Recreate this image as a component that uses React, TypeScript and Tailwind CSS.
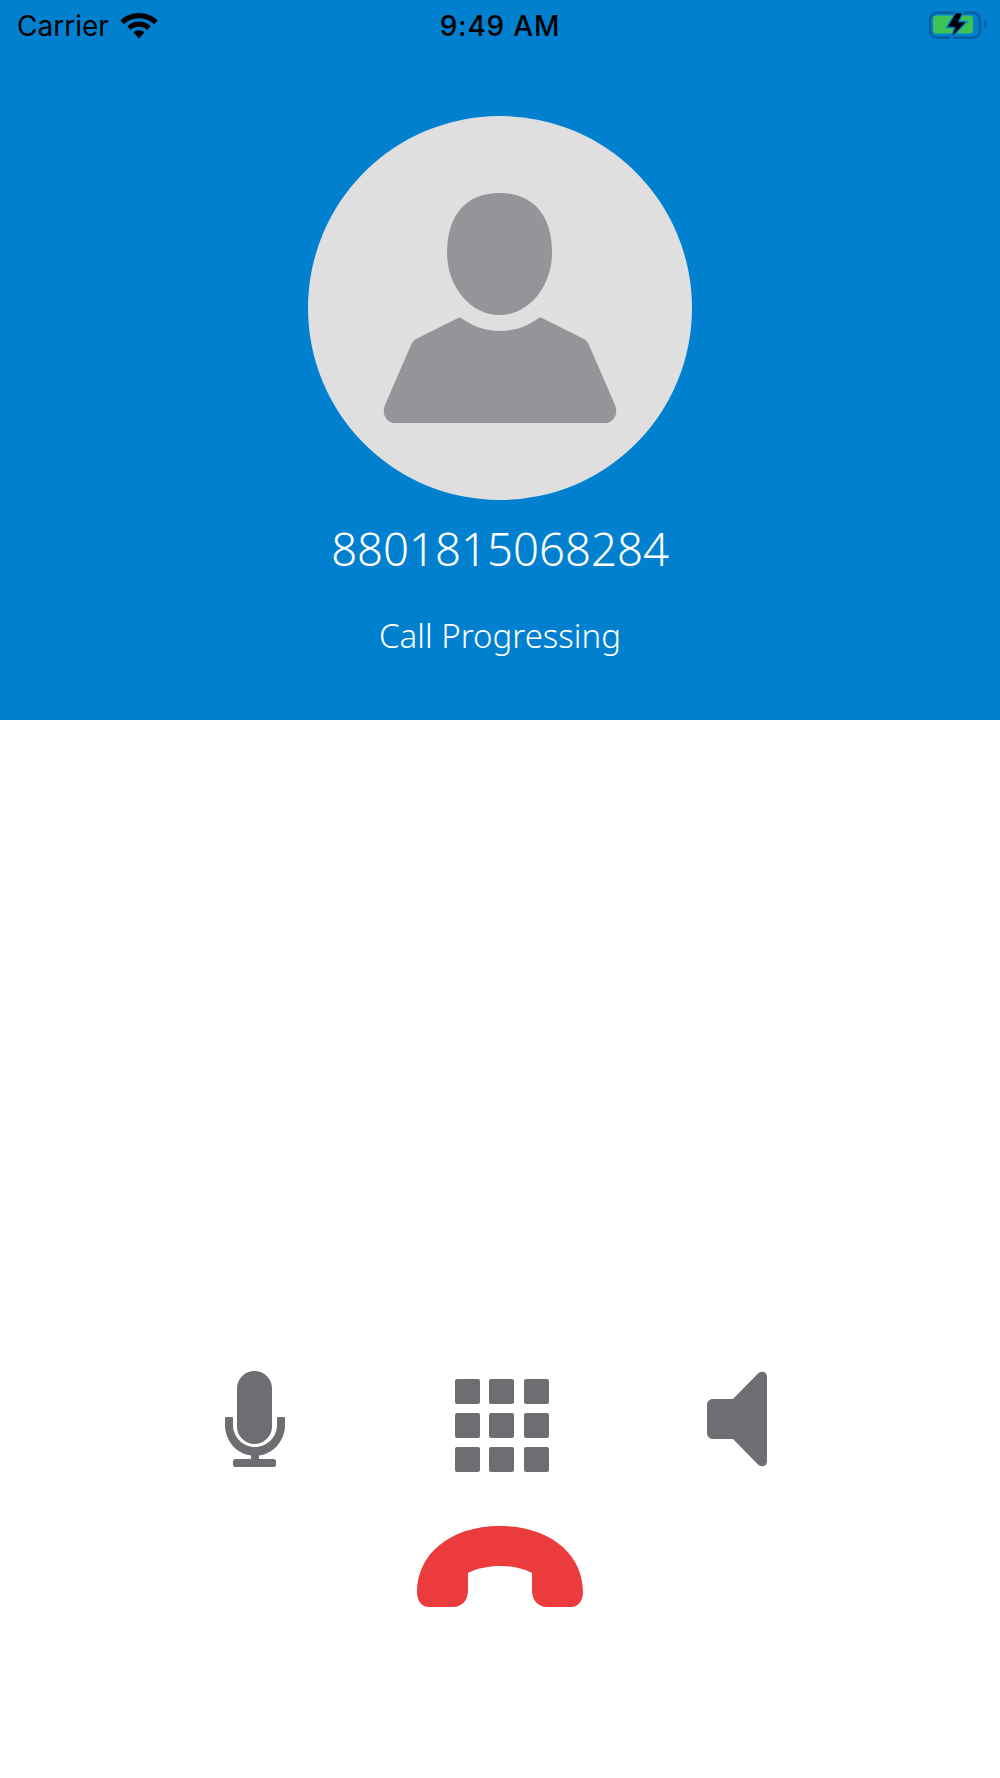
const iosFont = "font-['Inter','Liberation_Sans',sans-serif]";
const bodyFont = "font-['Noto_Sans','Open_Sans',sans-serif]";

function WifiIcon() {
  return (
    <svg width="38" height="26" viewBox="0 0 38 26" className="block">
      <path d="M19 0C11.6 0 5.2 2.9 0.4 7.4L3.9 11.2C7.9 7.5 13.1 5.2 19 5.2s11.1 2.3 15.1 6l3.5-3.8C32.8 2.9 26.4 0 19 0z" fill="#000" />
      <path d="M19 8.6c-4.6 0-8.6 1.8-11.7 4.6l3.5 3.8c2.1-2 5-3.2 8.2-3.2s6.1 1.200 8.200 3.200l3.500-3.800C27.600 10.400 23.600 8.600 19 8.600z" fill="#000" />
      <path d="M19 17.200c-2.200 0-4.100 0.800-5.600 2.100L19 25.500l5.600-6.200c-1.500-1.300-3.400-2.100-5.600-2.100z" fill="#000" />
    </svg>
  );
}

function BatteryIcon() {
  return (
    <svg width="60" height="30" viewBox="0 0 60 30" className="block">
      <rect x="2" y="1.750" width="50" height="25" rx="7" fill="none" stroke="#05609f" strokeWidth="2.500" />
      <rect x="5" y="4.500" width="40" height="18" rx="3" fill="#3dc453" />
      <path d="M56 9l2 1c1 .6 1 5.400 0 6l-2 1z" fill="#05609f" />
      <path d="M27.500 1.500H35L31 10.500H39L22.500 28L26.500 16.500H18.500z" fill="#000" stroke="#0180d0" strokeWidth="1.500" />
    </svg>
  );
}

function PersonIcon() {
  return (
    <svg width="234" height="230" viewBox="0 0 234 230" className="block">
      <path d="M116.500 0C148 0 169 20 169 60C169 93 146 122 116.500 122C87 122 64 93 64 60C64 20 85 0 116.500 0z" fill="#939598" />
      <path d="M74 125.500C76 124 77.500 124 79 125.500C89 133 102 138 117 138C132 138 145 133 155 125.500C156.500 124 158 124 160 125.500L201 146C204 148 205 150 206 152L232 212C236 222 230 230 221 230H13C4 230 -2 222 2 212L28 152C29 150 30 148 33 146z" fill="#939598" />
    </svg>
  );
}

function MicIcon() {
  return (
    <svg width="60" height="96" viewBox="0 0 60 96" className="block">
      <rect x="12" y="0" width="35" height="73" rx="17.500" fill="#6d6e71" />
      <path d="M1 46H7C7.500 46 8 46.500 8 47V54C8 66 18 76 30 76S52 66 52 54V47C52 46.500 52.500 46 53 46H59C59.500 46 60 46.500 60 47V54C60 70 48 83 34 84.500V88H30 26V84.500C12 83 0 70 0 54V47C0 46.500 .5 46 1 46z" fill="#6d6e71" />
      <rect x="8" y="88" width="43" height="8" rx="2.500" fill="#6d6e71" />
    </svg>
  );
}

function SpeakerIcon() {
  return (
    <svg width="60" height="96" viewBox="0 0 60 96" className="block">
      <path d="M6 28H26L50.500 3C54 -1 60 0.500 60 6V90C60 95.500 54 97 50.500 93L26 68H6C2.500 68 0 65.500 0 62V34C0 30.500 2.500 28 6 28z" fill="#6d6e71" />
    </svg>
  );
}

function HangupIcon() {
  return (
    <svg width="166" height="81" viewBox="0 0 166 81" className="block">
      <path d="M83 0C134 0 166 29 166 66C166 75 161 81 154 81H130C121 81 115 74 115 65V47C105 42 94 40 83 40C72 40 61 42 51 47V65C51 74 45 81 36 81H12C5 81 0 75 0 66C0 29 32 0 83 0z" fill="#ec3b3d" />
    </svg>
  );
}

const keys = [1, 2, 3, 4, 5, 6, 7, 8, 9];

export default function App() {
  return (
    <main className="flex h-[1778px] w-[1000px] flex-col bg-white">
      <section className="flex h-[720px] flex-col items-center bg-[#0180d0]">
        <div className={`grid h-[51px] w-full grid-cols-3 items-center px-[12px] text-black ${iosFont}`}>
          <div className="ml-[5px] flex items-center gap-[11px] text-[28px] leading-none">
            <span>Carrier</span>
            <WifiIcon />
          </div>
          <div className="text-center text-[28px] leading-none font-medium tracking-[0.8px]">9:49 AM</div>
          <div className="flex justify-end">
            <BatteryIcon />
          </div>
        </div>
        <div className="mt-[65px] flex h-[384px] w-[384px] items-start justify-center rounded-full bg-[#dfdfdf] pt-[77px]">
          <PersonIcon />
        </div>
        <h1 className={`mt-[18px] text-[45.500px] leading-[60px] font-[350] text-white ${bodyFont}`}>8801815068284</h1>
        <p className={`mt-[36px] text-[33px] leading-[44px] font-[350] text-white ${bodyFont}`}>Call Progressing</p>
      </section>

      <section className="mt-[651px] flex flex-col items-center">
        <div className="flex w-full items-start">
          <div className="ml-[225px]">
            <MicIcon />
          </div>
          <div className="mt-[8px] ml-[169.500px] grid grid-cols-[25px_25px_25px] gap-x-[9.500px] gap-y-[9px]">
            {keys.map((k) => (
              <span key={k} className="h-[25px] w-[25px] rounded-[2px] bg-[#6d6e71]"></span>
            ))}
          </div>
          <div className="ml-[158.500px]">
            <SpeakerIcon />
          </div>
        </div>
        <div className="mt-[54px]">
          <HangupIcon />
        </div>
      </section>
    </main>
  );
}
